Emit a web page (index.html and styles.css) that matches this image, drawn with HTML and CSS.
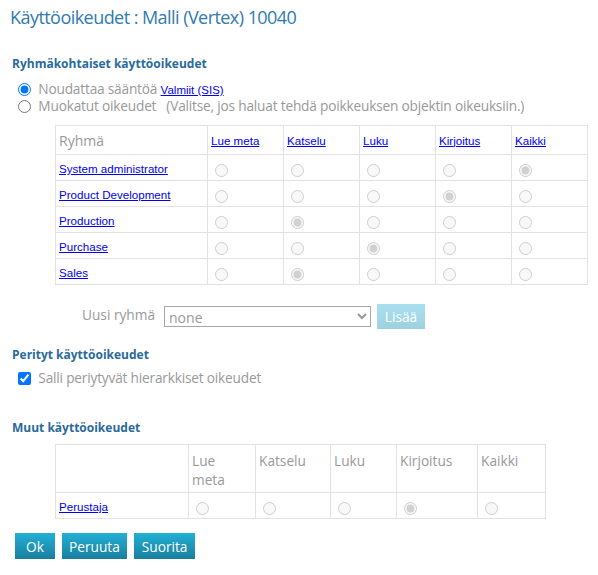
FILE: index.html
```html
<!DOCTYPE html>
<html>
<head>
  <title>Käyttöoikeudet</title>
  <link rel="stylesheet" href="styles.css">
</head>
<body>

  <h1 class="page-title">Käyttöoikeudet : Malli (Vertex) 10040</h1>

  <h4 class="section-title first">Ryhmäkohtaiset käyttöoikeudet</h4>
  <div class="mode-row">
    <label><input type="radio" name="mode" checked> Noudattaa sääntöä <a href="#" class="small-link">Valmiit (SIS)</a></label>
  </div>
  <div class="mode-row">
    <label><input type="radio" name="mode"> Muokatut oikeudet &nbsp; (Valitse, jos haluat tehdä poikkeuksen objektin oikeuksiin.)</label>
  </div>

  <table class="rights-table groups">
    <tr>
      <th class="name-col muted">Ryhmä</th>
      <th><a href="#">Lue meta</a></th>
      <th><a href="#">Katselu</a></th>
      <th><a href="#">Luku</a></th>
      <th><a href="#">Kirjoitus</a></th>
      <th><a href="#">Kaikki</a></th>
    </tr>
    <tr>
      <td><a href="#">System administrator</a></td>
      <td><input type="radio" name="g1" disabled></td>
      <td><input type="radio" name="g1" disabled></td>
      <td><input type="radio" name="g1" disabled></td>
      <td><input type="radio" name="g1" disabled></td>
      <td><input type="radio" name="g1" disabled checked></td>
    </tr>
    <tr>
      <td><a href="#">Product Development</a></td>
      <td><input type="radio" name="g2" disabled></td>
      <td><input type="radio" name="g2" disabled></td>
      <td><input type="radio" name="g2" disabled></td>
      <td><input type="radio" name="g2" disabled checked></td>
      <td><input type="radio" name="g2" disabled></td>
    </tr>
    <tr>
      <td><a href="#">Production</a></td>
      <td><input type="radio" name="g3" disabled></td>
      <td><input type="radio" name="g3" disabled checked></td>
      <td><input type="radio" name="g3" disabled></td>
      <td><input type="radio" name="g3" disabled></td>
      <td><input type="radio" name="g3" disabled></td>
    </tr>
    <tr>
      <td><a href="#">Purchase</a></td>
      <td><input type="radio" name="g4" disabled></td>
      <td><input type="radio" name="g4" disabled></td>
      <td><input type="radio" name="g4" disabled checked></td>
      <td><input type="radio" name="g4" disabled></td>
      <td><input type="radio" name="g4" disabled></td>
    </tr>
    <tr>
      <td><a href="#">Sales</a></td>
      <td><input type="radio" name="g5" disabled></td>
      <td><input type="radio" name="g5" disabled checked></td>
      <td><input type="radio" name="g5" disabled></td>
      <td><input type="radio" name="g5" disabled></td>
      <td><input type="radio" name="g5" disabled></td>
    </tr>
  </table>

  <div class="new-group">
    <span class="muted">Uusi ryhmä</span>
    <select class="group-select" disabled>
      <option>none</option>
    </select>
    <button class="add-btn" disabled>Lisää</button>
  </div>

  <h4 class="section-title">Perityt käyttöoikeudet</h4>
  <div class="inherit-row">
    <label><input type="checkbox" checked> Salli periytyvät hierarkkiset oikeudet</label>
  </div>

  <h4 class="section-title other">Muut käyttöoikeudet</h4>
  <table class="rights-table others">
    <tr>
      <th class="owner-col"></th>
      <th class="c1">Lue meta</th>
      <th class="c2">Katselu</th>
      <th class="c3">Luku</th>
      <th class="c4">Kirjoitus</th>
      <th class="c5">Kaikki</th>
    </tr>
    <tr>
      <td><a href="#">Perustaja</a></td>
      <td><input type="radio" name="o1" disabled></td>
      <td><input type="radio" name="o1" disabled></td>
      <td><input type="radio" name="o1" disabled></td>
      <td><input type="radio" name="o1" disabled checked></td>
      <td><input type="radio" name="o1" disabled></td>
    </tr>
  </table>

  <div class="actions">
    <button class="btn">Ok</button>
    <button class="btn">Peruuta</button>
    <button class="btn">Suorita</button>
  </div>

</body>
</html>
```

FILE: styles.css
```css
* {
  box-sizing: border-box;
}

body {
  font-family: "Open Sans", "Noto Sans", sans-serif;
  font-size: 13.7px;
  color: #999;
  margin: 0;
  padding: 0 12px;
  background: #fff;
}

a {
  color: #0000ee;
}

.muted {
  color: #999;
  font-weight: normal;
}

.page-title {
  font-size: 18px;
  font-weight: normal;
  color: #2f7ab0;
  margin: 5px 0 0 -2px;
  letter-spacing: -0.55px;
}

.section-title {
  font-size: 12px;
  font-weight: bold;
  color: #2a6a9c;
  margin: 17px 0 6px 0;
}

.section-title.first {
  margin-top: 26px;
  margin-bottom: 8px;
}

.section-title.other {
  margin-top: 33px;
  margin-bottom: 8px;
}

.mode-row,
.inherit-row {
  height: 17px;
  line-height: 17px;
  letter-spacing: -0.2px;
  white-space: nowrap;
}

.mode-row input,
.inherit-row input {
  margin: 0 4px 0 6px;
  vertical-align: -2px;
}

.small-link {
  font-family: "Liberation Sans", Arial, sans-serif;
  font-size: 11.5px;
  letter-spacing: 0;
}

/* Tables */
.rights-table {
  border-collapse: collapse;
  margin-left: 43px;
}

.rights-table th,
.rights-table td {
  border: 1px solid #e2e2e2;
  text-align: left;
  padding: 0 3px;
}

.rights-table a {
  font-family: "Liberation Sans", Arial, sans-serif;
  font-size: 11.6px;
}

.rights-table input[type="radio"] {
  margin: 2px 0 0 4px;
  vertical-align: middle;
}

.groups {
  margin-top: 11px;
  width: 533px;
}

.groups th {
  height: 29px;
  width: 76px;
  font-weight: normal;
  vertical-align: middle;
  padding-bottom: 2px;
}

.groups th.name-col {
  width: 152px;
  font-size: 14px;
  padding-bottom: 0;
}

.groups td {
  height: 26px;
}

.new-group {
  display: flex;
  align-items: center;
  margin: 19px 0 0 70px;
  height: 25px;
}

.new-group span {
  margin-right: 9px;
  position: relative;
  top: -2px;
}

.group-select {
  width: 207px;
  height: 21px;
  font-family: "Open Sans", sans-serif;
  font-size: 14px;
  color: #999;
  background: #fff;
  border: 1px solid #a6a6a6;
  border-radius: 0;
  margin-right: 6px;
  opacity: 1;
}

.add-btn {
  width: 48px;
  height: 25px;
  border: none;
  color: #fff;
  font-family: "Open Sans", sans-serif;
  font-size: 13.7px;
  background: linear-gradient(#a9e0f0, #9dd1e0);
  padding: 0;
}

.others {
  width: 490px;
  table-layout: fixed;
}

.others th {
  height: 48px;
  font-weight: normal;
  vertical-align: top;
  padding: 6px 10px 0 3px;
  line-height: 19px;
}

.others .owner-col { width: 133px; }
.others .c1 { width: 67px; }
.others .c2 { width: 75px; }
.others .c3 { width: 66px; }
.others .c4 { width: 81px; }
.others .c5 { width: 68px; }

.others td {
  height: 26px;
}

.actions {
  display: flex;
  gap: 7px;
  margin: 14px 0 0 3px;
}

.btn {
  height: 26px;
  padding: 0 7px;
  border: none;
  color: #fff;
  font-family: "Open Sans", sans-serif;
  font-size: 13.7px;
  background: linear-gradient(#22b0d6, #1a7e9e);
  cursor: pointer;
}

.btn:first-child {
  width: 40px;
}

.btn:last-child {
  padding: 0 8px;
}
```
